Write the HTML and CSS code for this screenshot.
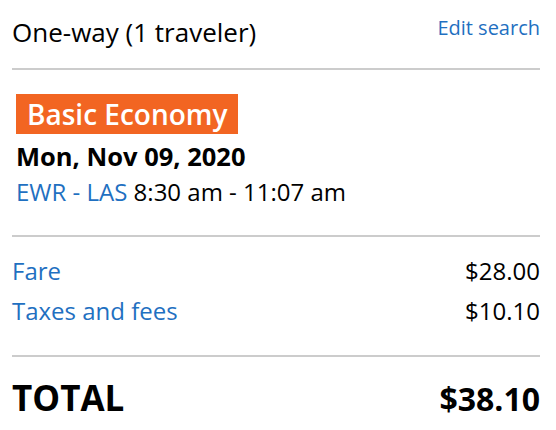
FILE: index.html
```html
<!DOCTYPE html>
<html lang="en">
<head>
<meta charset="utf-8">
<title>Trip summary</title>
<link rel="stylesheet" href="styles.css">
</head>
<body>
<div class="summary">
  <div class="header">
    <span class="trip">One-way (1 traveler)</span>
    <a class="edit" href="#">Edit search</a>
  </div>
  <div class="divider"></div>
  <div class="flight">
    <span class="badge">Basic Economy</span>
    <div class="date">Mon, Nov 09, 2020</div>
    <div class="route"><a class="link" href="#">EWR - LAS</a> 8:30 am - 11:07 am</div>
  </div>
  <div class="divider"></div>
  <div class="fares">
    <div class="row"><a class="link" href="#">Fare</a><span>$28.00</span></div>
    <div class="row"><a class="link" href="#">Taxes and fees</a><span>$10.10</span></div>
  </div>
  <div class="divider"></div>
  <div class="total">
    <span class="total-label">TOTAL</span>
    <span class="total-amount">$38.10</span>
  </div>
</div>
</body>
</html>
```
FILE: styles.css
```css
html, body {
  margin: 0;
  padding: 0;
  background: #ffffff;
}
body {
  font-family: "Open Sans", "Liberation Sans", sans-serif;
  color: #000000;
}
a {
  text-decoration: none;
}
.summary {
  width: 528px;
  padding: 0 16px 0 12px;
}
.header {
  display: flex;
  justify-content: space-between;
  align-items: flex-start;
  padding-top: 16px;
  margin-bottom: 20px;
}
.trip {
  font-size: 26px;
  line-height: 32px;
}
.edit {
  font-size: 20px;
  line-height: 22px;
  margin-top: 1px;
  color: #1f70c1;
}
.divider {
  height: 2px;
  background: #cccccc;
}
.flight {
  padding: 24px 0 27px 4px;
}
.badge {
  display: inline-block;
  background: #f26522;
  color: #ffffff;
  font-size: 28px;
  font-weight: 600;
  line-height: 40px;
  padding: 0 10px 0 11px;
}
.date {
  font-size: 25.5px;
  font-weight: 700;
  line-height: 32px;
  margin-top: 6px;
}
.route {
  font-size: 24px;
  line-height: 32px;
  margin-top: 4px;
}
.link {
  color: #1f70c1;
}
.fares {
  padding: 14px 0 24px;
}
.row {
  display: flex;
  justify-content: space-between;
  font-size: 24px;
  line-height: 40px;
}
.total {
  display: flex;
  justify-content: space-between;
  align-items: baseline;
  padding-top: 19px;
  font-weight: 700;
  line-height: 44px;
}
.total-label {
  font-size: 35px;
}
.total-amount {
  font-size: 32px;
}
```
